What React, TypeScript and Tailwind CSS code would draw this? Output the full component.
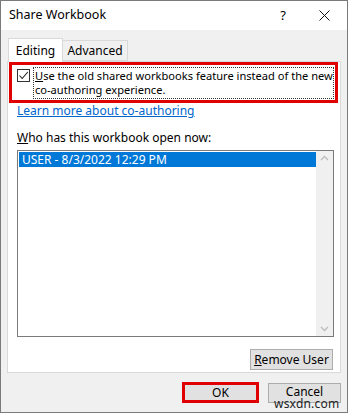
import React from "react";

const font = { fontFamily: '"Noto Sans", "Segoe UI", Arial, sans-serif' };

export default function App() {
  return (
    <div
      className="w-[348px] h-[413px] flex flex-col border border-[#7a7a7a] bg-[#f0f0f0] text-[12px] text-black"
      style={font}
    >
      {/* title bar */}
      <div className="h-[29px] bg-white flex items-center pl-[8px] shrink-0">
        <span className="flex-1 text-[12.5px] leading-none">Share Workbook</span>
        <span className="w-[20px] text-center text-[13px] leading-none mr-[26px]">?</span>
        <svg width="11" height="11" viewBox="0 0 11 11" className="mr-[17px]">
          <path d="M0.5 0.5L10.5 10.5M10.5 0.5L0.5 10.5" stroke="#111" strokeWidth="1" />
        </svg>
      </div>

      <div className="flex-1 flex flex-col pl-[6px] pr-[6px] pt-[8px]">
        {/* tabs */}
        <div className="flex items-end h-[23px] pl-[1px]">
          <div className="relative z-10 h-[24px] -mb-px w-[55px] bg-white border border-b-0 border-[#d9d9d9] flex items-center justify-center text-[12px]">
            Editing
          </div>
          <div className="h-[21px] w-[65px] border border-l-0 border-[#d9d9d9] flex items-center justify-center text-[12px]">
            Advanced
          </div>
        </div>

        {/* panel */}
        <div className="h-[312px] bg-white border border-[#d9d9d9] flex flex-col pl-[1px] pr-[1px]">
          <div className="h-[41px] border-[3px] border-[#e00000] flex items-start gap-[3px] mr-[1px]">
            <div className="w-[13px] h-[13px] border border-[#333] ml-[5px] mt-[4px] flex items-center justify-center shrink-0">
              <svg width="11" height="11" viewBox="0 0 11 11">
                <path d="M1.5 5.5L4.2 8.5L9.8 2" fill="none" stroke="#222" strokeWidth="1.1" />
              </svg>
            </div>
            <div className="mt-[2px] w-[301px] h-[32px] border border-dotted border-[#333] px-[1px] pt-[1px] leading-[14px] text-[11.1px] whitespace-nowrap">
              <span className="underline">U</span>se the old shared workbooks feature instead of the new
              <br />
              co-authoring experience.
            </div>
          </div>

          <div className="ml-[8px] mt-[1px] h-[14px] leading-[14px] text-[#0066cc] underline">
            Learn more about co-authoring
          </div>

          <div className="ml-[8px] mt-[13px] h-[14px] leading-[14px]">
            <span className="underline">W</span>ho has this workbook open now:
          </div>

          <div className="ml-[8px] mt-[5px] w-[317px] h-[187px] border border-[#7a7a7a] flex">
            <div className="flex-1 pt-[1px] pl-[1px]">
              <div className="h-[15px] bg-[#0078d7] text-white leading-[15px] pl-[3px]">
                USER - 8/3/2022 12:29 PM
              </div>
            </div>
            <div className="w-[17px] bg-[#f0f0f0] flex flex-col justify-between items-center py-[4px]">
              <svg width="9" height="6" viewBox="0 0 9 6">
                <path d="M1 5L4.5 1.5L8 5" fill="none" stroke="#bcbcbc" strokeWidth="1.3" />
              </svg>
              <svg width="9" height="6" viewBox="0 0 9 6">
                <path d="M1 1L4.5 4.5L8 1" fill="none" stroke="#bcbcbc" strokeWidth="1.3" />
              </svg>
            </div>
          </div>

          <div className="flex justify-end mt-[12px] mr-[6px]">
            <div className="w-[83px] h-[21px] bg-[#e1e1e1] border border-[#adadad] flex items-center justify-center">
              <span className="underline">R</span>emove User
            </div>
          </div>
        </div>

        {/* footer buttons */}
        <div className="flex justify-end items-center mt-[9px]">
          <div className="w-[77px] h-[21px] border-[3px] border-[#e00000] bg-[#e1e1e1] flex items-center justify-center">
            OK
          </div>
          <div className="relative ml-[9px]">
            <div className="w-[73px] h-[20px] bg-[#e1e1e1] border border-[#adadad] flex items-start justify-center leading-[16px]">
              Cancel
            </div>
            <div className="absolute left-[6px] top-[15px] text-[12px] leading-none text-[#222] tracking-[0.2px]">
              wsxdn.com
            </div>
          </div>
        </div>
      </div>
    </div>
  );
}
